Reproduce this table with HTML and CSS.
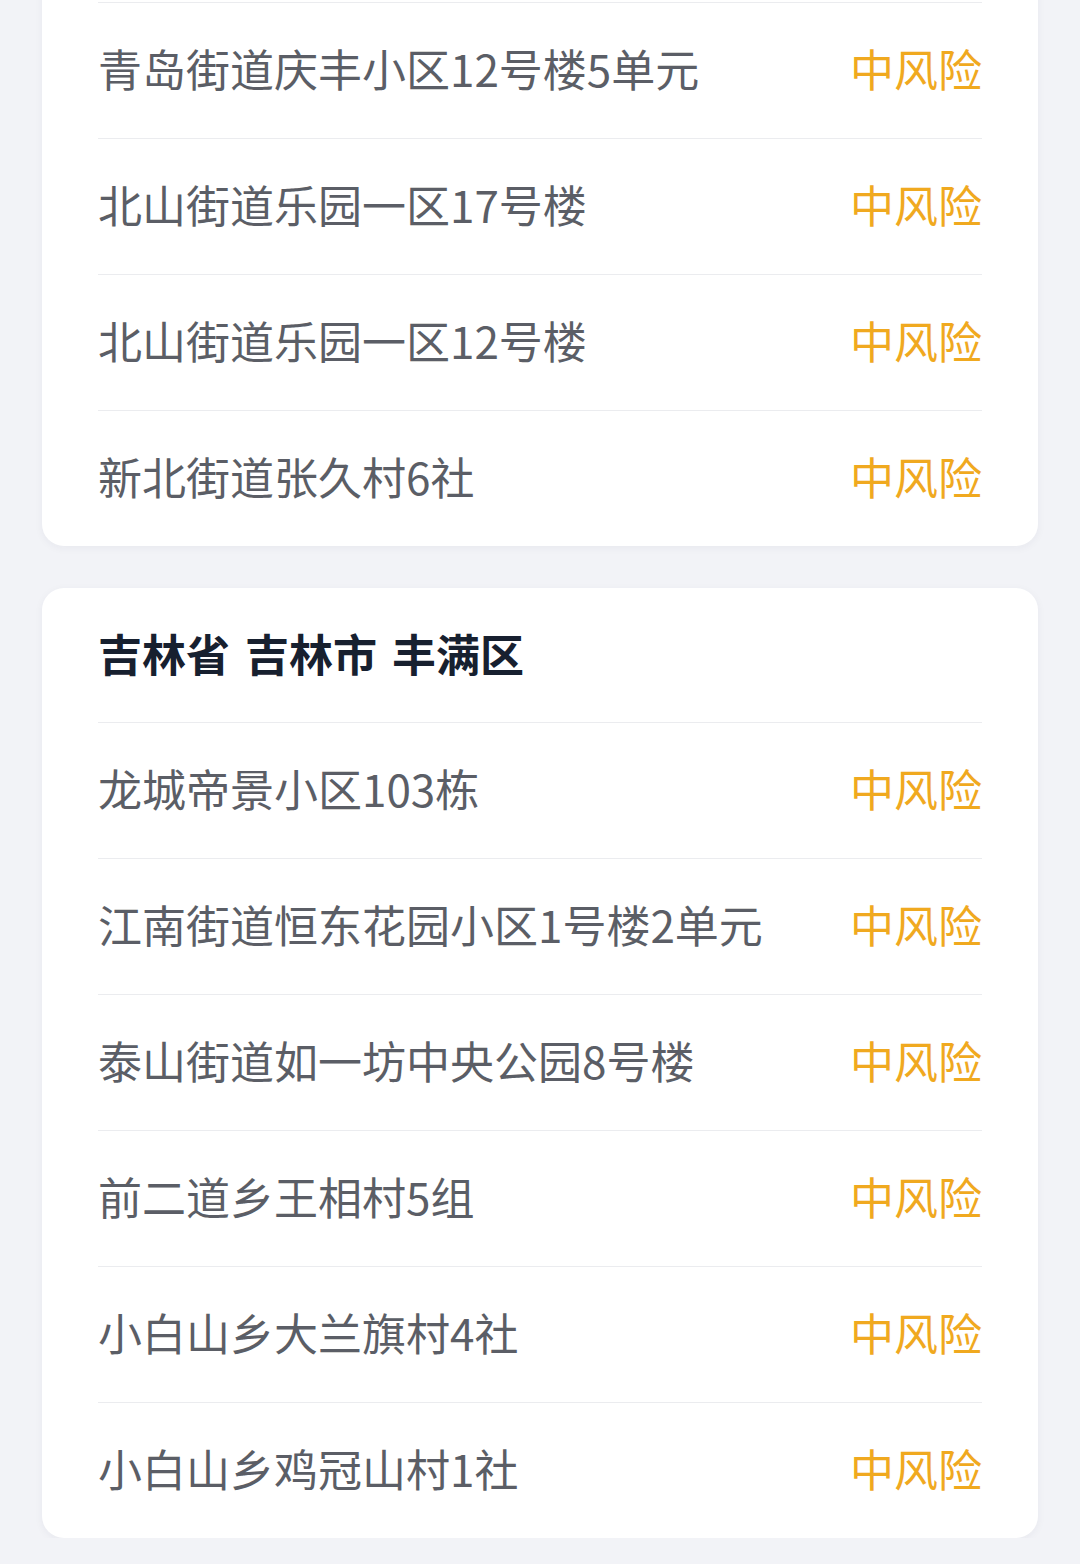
FILE: index.html
```html
<!DOCTYPE html>
<html lang="zh-CN">
<head>
<meta charset="utf-8">
<title>风险地区</title>
<link rel="stylesheet" href="styles.css">
</head>
<body>
<main class="page">
  <section class="card card-cut">
    <div class="row"><span class="place">青岛街道庆丰小区12号楼5单元</span><span class="risk">中风险</span></div>
    <div class="row"><span class="place">北山街道乐园一区17号楼</span><span class="risk">中风险</span></div>
    <div class="row"><span class="place">北山街道乐园一区12号楼</span><span class="risk">中风险</span></div>
    <div class="row"><span class="place">新北街道张久村6社</span><span class="risk">中风险</span></div>
  </section>
  <section class="card">
    <h2 class="region">吉林省 吉林市 丰满区</h2>
    <div class="row"><span class="place">龙城帝景小区103栋</span><span class="risk">中风险</span></div>
    <div class="row"><span class="place">江南街道恒东花园小区1号楼2单元</span><span class="risk">中风险</span></div>
    <div class="row"><span class="place">泰山街道如一坊中央公园8号楼</span><span class="risk">中风险</span></div>
    <div class="row"><span class="place">前二道乡王相村5组</span><span class="risk">中风险</span></div>
    <div class="row"><span class="place">小白山乡大兰旗村4社</span><span class="risk">中风险</span></div>
    <div class="row"><span class="place">小白山乡鸡冠山村1社</span><span class="risk">中风险</span></div>
  </section>
</main>
</body>
</html>
```

FILE: styles.css
```css
html, body {
  margin: 0;
  padding: 0;
  background: #f2f3f7;
}
body {
  font-family: "Noto Sans CJK SC", "Noto Sans", sans-serif;
  overflow: hidden;
}
.page {
  display: flex;
  flex-direction: column;
  gap: 42px;
  padding: 0 42px;
  margin-top: -40px;
}
.card {
  background: #ffffff;
  border-radius: 22px;
  padding: 0 56px;
  box-shadow: 0 2px 8px rgba(30, 40, 70, 0.05);
}
.card-cut {
  padding-top: 42px;
}
.region {
  margin: 0;
  height: 134px;
  box-sizing: border-box;
  padding-bottom: 4px;
  display: flex;
  align-items: center;
  font-size: 44px;
  font-weight: 700;
  color: #17202f;
  word-spacing: 5px;
}
.row {
  height: 136px;
  box-sizing: border-box;
  padding-bottom: 5px;
  border-top: 1px solid #ebecef;
  display: flex;
  align-items: center;
  justify-content: space-between;
  font-size: 44px;
}
.place {
  color: #5b5e66;
}
.risk {
  color: #f0a91f;
}
```
